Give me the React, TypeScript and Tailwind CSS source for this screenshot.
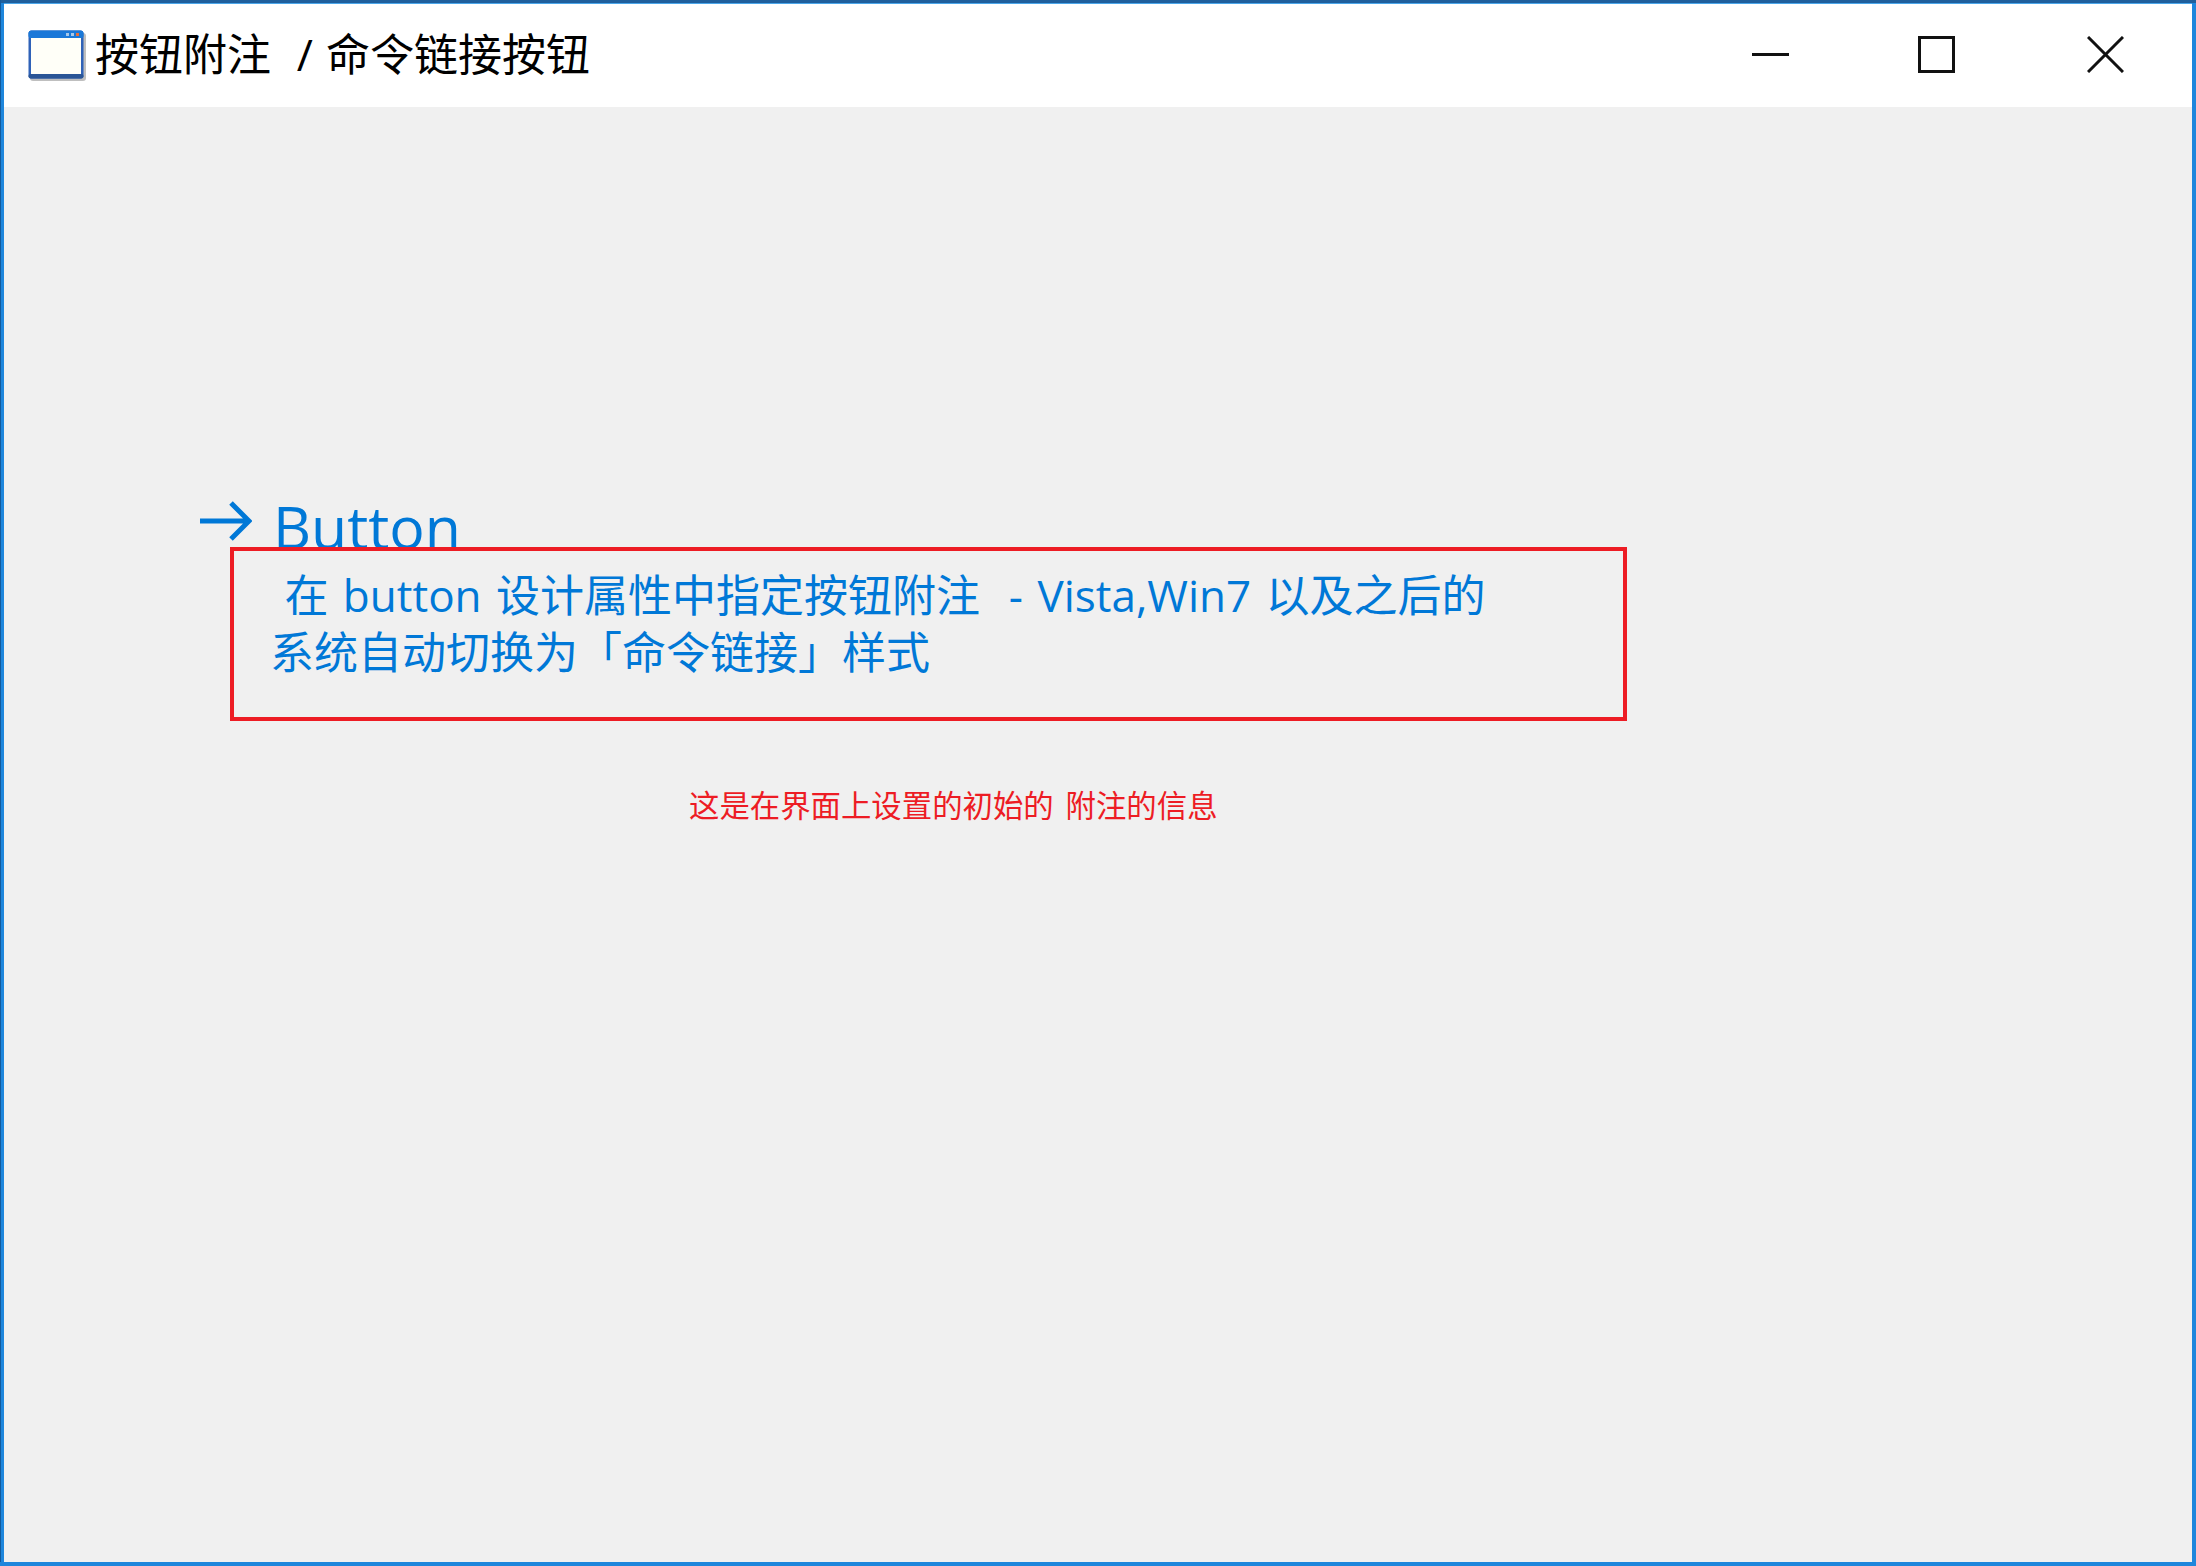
import React from "react";

const font = "font-['Open_Sans','Noto_Sans_CJK_SC',sans-serif]";

const AppIcon = () => (
  <svg width="58" height="51" viewBox="0 0 58 51">
    <rect x="2" y="3" width="56" height="48" rx="3" fill="#8a8a8a" opacity="0.55" />
    <rect x="0.5" y="0.5" width="55" height="48" rx="3" fill="#2f62b8" />
    <rect x="0.5" y="0.5" width="55" height="8" rx="3" fill="#1a78d8" />
    <rect x="0.5" y="44" width="55" height="4.5" rx="2" fill="#2a5596" />
    <rect x="3" y="8" width="50" height="36" fill="#fffff8" />
    <rect x="38" y="3" width="3" height="3" fill="#a8c8e8" />
    <rect x="43" y="3" width="3" height="3" fill="#a8c8e8" />
    <rect x="48" y="3" width="3" height="3" fill="#e8703a" />
  </svg>
);

const WindowButton = ({ children }: { children: React.ReactNode }) => (
  <div className="w-[37px] h-[37px] flex items-center justify-center">
    <svg width="37" height="37" viewBox="0 0 37 37" fill="none" stroke="#111" strokeWidth="3">
      {children}
    </svg>
  </div>
);

const App = () => {
  return (
    <div className={`relative w-[2196px] h-[1566px] flex flex-col bg-[#f0f0f0] border-4 border-t-0 border-[#1e86dc] ${font}`}>
      <div className="absolute left-[-4px] top-0 bottom-0 w-[1px] bg-[#125a9c]" />
      <div className="h-[3px] mx-[-4px] bg-[#1f5f9c]" />
      <div className="h-[1px] bg-[#4aa6ea]" />
      <div className="h-[103px] bg-white flex items-center pl-[24px] pr-[68px]">
        <AppIcon />
        <span className="ml-[9px] mt-[-3px] text-[44px] leading-[60px] text-black whitespace-pre [word-spacing:1.5px]">按钮附注  / 命令链接按钮</span>
        <div className="ml-auto flex mt-[-3px]">
          <div className="mr-[129px]">
            <WindowButton>
              <path d="M0 18.5H37" />
            </WindowButton>
          </div>
          <div className="mr-[132px]">
            <WindowButton>
              <rect x="1.5" y="1.5" width="34" height="34" />
            </WindowButton>
          </div>
          <WindowButton>
            <path d="M1 1L36 36M36 1L1 36" />
          </WindowButton>
        </div>
      </div>

      <div className="flex-1 flex flex-col pt-[379px] text-[#0078d7]">
        <div className="flex items-start pl-[196px]">
          <svg className="mt-[15px]" width="52" height="40" viewBox="0 0 52 40" fill="none" stroke="#0078d7" strokeWidth="5">
            <path d="M0 20H49M31 2L49 20L31 38" />
          </svg>
          <span className="ml-[21px] text-[59px] leading-[80px]">Button</span>
        </div>
        <div className="mt-[1px] ml-[266px] text-[44px] leading-[57px] whitespace-pre">
          <div className="[word-spacing:3px]"> 在 button 设计属性中指定按钮附注  - Vista,Win7 以及之后的</div>
          <div>系统自动切换为「命令链接」样式</div>
        </div>
        <div className="mt-[105px] ml-[685px] text-[30.4px] leading-[40px] text-[#ed1c24] whitespace-pre [word-spacing:4px]">这是在界面上设置的初始的 附注的信息</div>
      </div>

      {/* red annotation box */}
      <div className="absolute left-[226px] top-[547px] w-[1397px] h-[174px] border-4 border-[#ed1c24]" />
    </div>
  );
};

export default App;
